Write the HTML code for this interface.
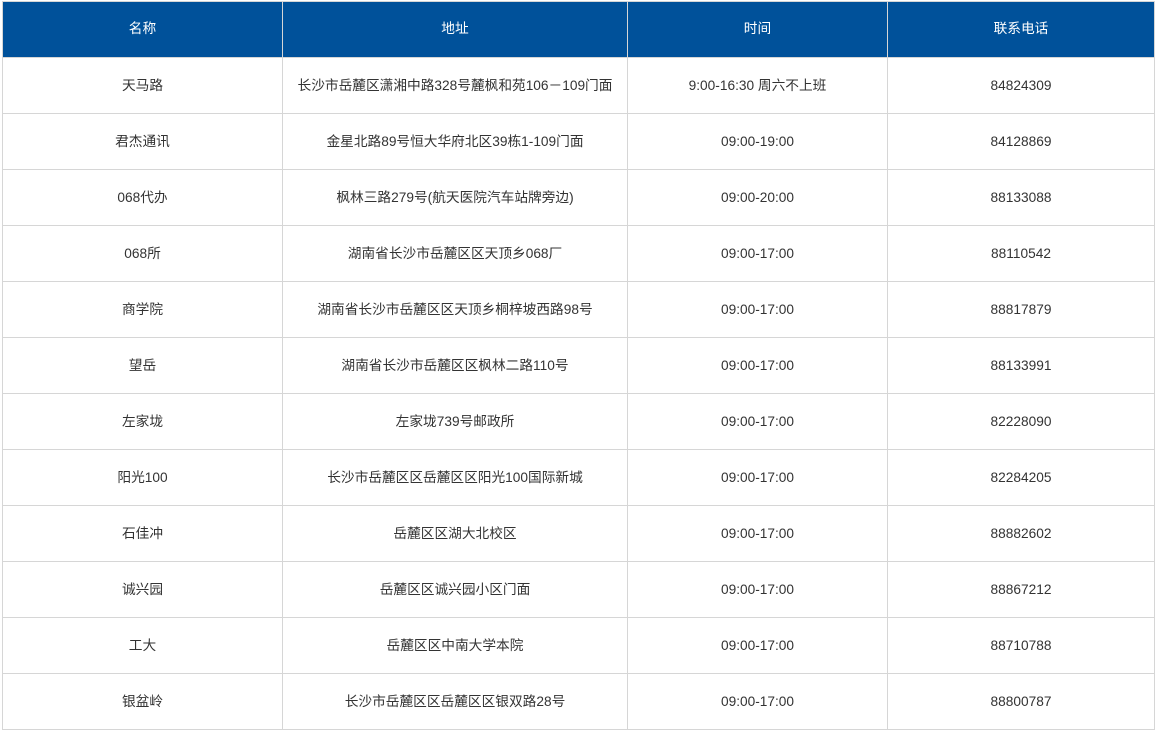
<!DOCTYPE html>
<html><head><meta charset="utf-8"><style>
body{margin:0;background:#fff;width:1156px;height:732px;overflow:hidden}
table{position:absolute;left:2px;top:1px;border-collapse:collapse;table-layout:fixed;width:1152px;font-family:"Liberation Sans","Noto Sans CJK SC",sans-serif;font-size:13.7px;color:#333;line-height:18px}
td,th{border:1px solid #d6d6d6;padding:0;box-sizing:border-box;text-align:center;vertical-align:middle}
td{height:56px;padding-top:1px}
th{background:#00519a;color:#fff;font-weight:normal;height:56px;padding-bottom:1px}
</style></head><body>
<table>
<colgroup><col style="width:280px"><col style="width:345px"><col style="width:260px"><col style="width:267px"></colgroup>
<tr><th>名称</th><th>地址</th><th>时间</th><th>联系电话</th></tr>
<tr><td>天马路</td><td>长沙市岳麓区潇湘中路328号麓枫和苑106－109门面</td><td>9:00-16:30 周六不上班</td><td>84824309</td></tr>
<tr><td>君杰通讯</td><td>金星北路89号恒大华府北区39栋1-109门面</td><td>09:00-19:00</td><td>84128869</td></tr>
<tr><td>068代办</td><td>枫林三路279号(航天医院汽车站牌旁边)</td><td>09:00-20:00</td><td>88133088</td></tr>
<tr><td>068所</td><td>湖南省长沙市岳麓区区天顶乡068厂</td><td>09:00-17:00</td><td>88110542</td></tr>
<tr><td>商学院</td><td>湖南省长沙市岳麓区区天顶乡桐梓坡西路98号</td><td>09:00-17:00</td><td>88817879</td></tr>
<tr><td>望岳</td><td>湖南省长沙市岳麓区区枫林二路110号</td><td>09:00-17:00</td><td>88133991</td></tr>
<tr><td>左家垅</td><td>左家垅739号邮政所</td><td>09:00-17:00</td><td>82228090</td></tr>
<tr><td>阳光100</td><td>长沙市岳麓区区岳麓区区阳光100国际新城</td><td>09:00-17:00</td><td>82284205</td></tr>
<tr><td>石佳冲</td><td>岳麓区区湖大北校区</td><td>09:00-17:00</td><td>88882602</td></tr>
<tr><td>诚兴园</td><td>岳麓区区诚兴园小区门面</td><td>09:00-17:00</td><td>88867212</td></tr>
<tr><td>工大</td><td>岳麓区区中南大学本院</td><td>09:00-17:00</td><td>88710788</td></tr>
<tr><td>银盆岭</td><td>长沙市岳麓区区岳麓区区银双路28号</td><td>09:00-17:00</td><td>88800787</td></tr>
</table>
</body></html>
